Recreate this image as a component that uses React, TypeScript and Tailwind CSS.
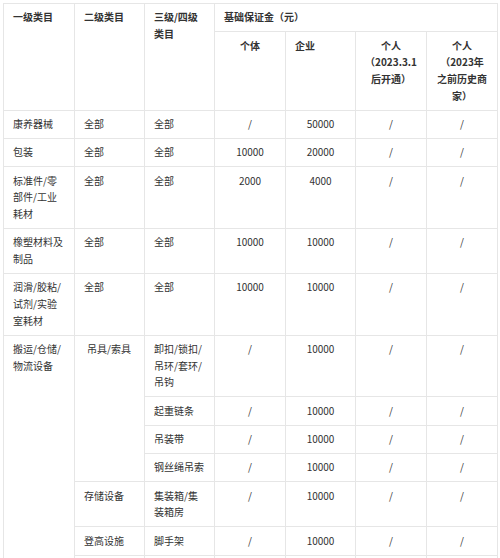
import React from "react";

const td = "border border-[#e6e6e6] align-top px-[9px] py-[5.3px] leading-[16.7px]";
const tdc = td + " text-center";

export default function App() {
  return (
    <div
      className="bg-white w-[500px] h-[558px] overflow-hidden pl-[3px] pt-[3px] text-[#333] text-[10px]"
      style={{ fontFamily: '"Noto Sans CJK SC", "Noto Sans", sans-serif' }}
    >
      <table className="border-collapse table-fixed w-[494px]">
        <colgroup>
          <col className="w-[71px]" />
          <col className="w-[70px]" />
          <col className="w-[70px]" />
          <col className="w-[71px]" />
          <col className="w-[70px]" />
          <col className="w-[71px]" />
          <col className="w-[71px]" />
        </colgroup>
        <tbody>
          <tr className="font-bold">
            <td rowSpan={2} className={td}>一级类目</td>
            <td rowSpan={2} className={td}>二级类目</td>
            <td rowSpan={2} className={td}>三级/四级<br />类目</td>
            <td colSpan={4} className={td}>基础保证金（元）</td>
          </tr>
          <tr className="font-bold">
            <td className={tdc}>个体</td>
            <td className={td}>企业</td>
            <td className={tdc}>个人<br />（2023.3.1<br />后开通）</td>
            <td className={tdc + " px-[4px]"}>个人<br />（2023年<br />之前历史商<br />家）</td>
          </tr>
          <tr>
            <td className={td}>康养器械</td>
            <td className={td}>全部</td>
            <td className={td}>全部</td>
            <td className={tdc}>/</td>
            <td className={tdc}>50000</td>
            <td className={tdc}>/</td>
            <td className={tdc}>/</td>
          </tr>
          <tr>
            <td className={td}>包装</td>
            <td className={td}>全部</td>
            <td className={td}>全部</td>
            <td className={tdc}>10000</td>
            <td className={tdc}>20000</td>
            <td className={tdc}>/</td>
            <td className={tdc}>/</td>
          </tr>
          <tr>
            <td className={td}>标准件/零<br />部件/工业<br />耗材</td>
            <td className={td}>全部</td>
            <td className={td}>全部</td>
            <td className={tdc}>2000</td>
            <td className={tdc}>4000</td>
            <td className={tdc}>/</td>
            <td className={tdc}>/</td>
          </tr>
          <tr>
            <td className={td}>橡塑材料及<br />制品</td>
            <td className={td}>全部</td>
            <td className={td}>全部</td>
            <td className={tdc}>10000</td>
            <td className={tdc}>10000</td>
            <td className={tdc}>/</td>
            <td className={tdc}>/</td>
          </tr>
          <tr>
            <td className={td}>润滑/胶粘/<br />试剂/实验<br />室耗材</td>
            <td className={td}>全部</td>
            <td className={td}>全部</td>
            <td className={tdc}>10000</td>
            <td className={tdc}>10000</td>
            <td className={tdc}>/</td>
            <td className={tdc}>/</td>
          </tr>
          <tr>
            <td rowSpan={7} className={td}>搬运/仓储/<br />物流设备</td>
            <td rowSpan={4} className={td + " pl-[12px]"}>吊具/索具</td>
            <td className={td}>卸扣/锁扣/<br />吊环/套环/<br />吊钩</td>
            <td className={tdc}>/</td>
            <td className={tdc}>10000</td>
            <td className={tdc}>/</td>
            <td className={tdc}>/</td>
          </tr>
          <tr>
            <td className={td}>起重链条</td>
            <td className={tdc}>/</td>
            <td className={tdc}>10000</td>
            <td className={tdc}>/</td>
            <td className={tdc}>/</td>
          </tr>
          <tr>
            <td className={td}>吊装带</td>
            <td className={tdc}>/</td>
            <td className={tdc}>10000</td>
            <td className={tdc}>/</td>
            <td className={tdc}>/</td>
          </tr>
          <tr>
            <td className={td}>钢丝绳吊索</td>
            <td className={tdc}>/</td>
            <td className={tdc}>10000</td>
            <td className={tdc}>/</td>
            <td className={tdc}>/</td>
          </tr>
          <tr>
            <td className={td}>存储设备</td>
            <td className={td}>集装箱/集<br />装箱房</td>
            <td className={tdc}>/</td>
            <td className={tdc}>10000</td>
            <td className={tdc}>/</td>
            <td className={tdc}>/</td>
          </tr>
          <tr>
            <td className={td}>登高设施</td>
            <td className={td}>脚手架</td>
            <td className={tdc}>/</td>
            <td className={tdc}>10000</td>
            <td className={tdc}>/</td>
            <td className={tdc}>/</td>
          </tr>
          <tr>
            <td className={td}>&nbsp;</td>
            <td className={td}>&nbsp;</td>
            <td className={tdc}>&nbsp;</td>
            <td className={tdc}>&nbsp;</td>
            <td className={tdc}>&nbsp;</td>
            <td className={tdc}>&nbsp;</td>
          </tr>
        </tbody>
      </table>
    </div>
  );
}
